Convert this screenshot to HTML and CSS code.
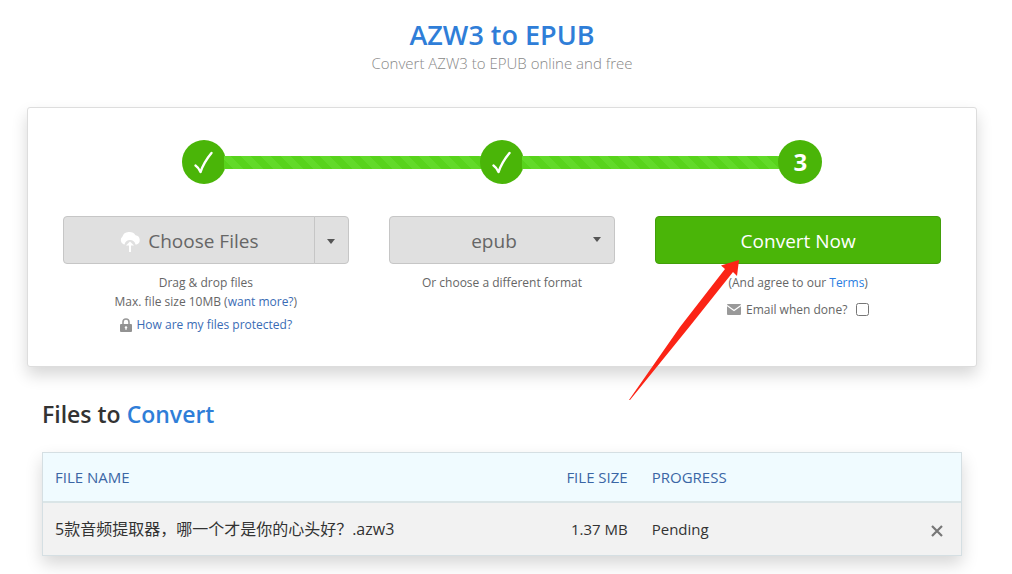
FILE: index.html
```html
<!DOCTYPE html>
<html lang="en">
<head>
    <meta charset="UTF-8">
    <meta name="viewport" content="width=device-width, initial-scale=1.0">
    <title>AZW3 to EPUB</title>
    <link rel="stylesheet" href="styles.css">
</head>
<body>
    <header class="page-header">
        <h1>AZW3 to EPUB</h1>
        <p>Convert AZW3 to EPUB online and free</p>
    </header>

    <main>
        <form class="converter">
            <div class="steps">
                <span class="step">
                    <svg width="22" height="24" viewBox="0 0 22 24"><path d="M2.500 15.500 Q5 17 7.500 22 Q11 12 18.500 3" fill="none" stroke="#fff" stroke-width="2.4" stroke-linecap="round" stroke-linejoin="round"/></svg>
                </span>
                <span class="step-bar"></span>
                <span class="step">
                    <svg width="22" height="24" viewBox="0 0 22 24"><path d="M2.500 15.500 Q5 17 7.500 22 Q11 12 18.500 3" fill="none" stroke="#fff" stroke-width="2.4" stroke-linecap="round" stroke-linejoin="round"/></svg>
                </span>
                <span class="step-bar"></span>
                <span class="step">3</span>
            </div>

            <div class="columns">
                <div class="column">
                    <div class="btn-group">
                        <button type="button" class="btn btn-choose">
                            <svg width="22" height="22" viewBox="0 0 22 22"><path d="M5 14.500 A4.600 4.600 0 0 1 3.500 6.500 A7 6 0 0 1 16.500 5.200 A4.800 4.800 0 0 1 17.500 14.500 L16.500 14.500 Q15.500 10 11 10 Q6.500 10 5.500 14.500 Z" fill="#fff"/><path d="M11 11.500 L15 15.500 H12 V22 H10 V15.500 H7 Z" fill="#fff"/></svg>
                            Choose Files
                        </button>
                        <button type="button" class="btn btn-toggle" aria-label="More sources"><span class="caret"></span></button>
                    </div>
                    <p>Drag &amp; drop files</p>
                    <p>Max. file size 10MB (<a href="#">want more?</a>)</p>
                    <p class="extra">
                        <svg width="12" height="14" viewBox="0 0 12 14"><path d="M3 7 V4 A3 3 0 0 1 9 4 V7" fill="none" stroke="#999" stroke-width="1.6"/><rect y="6" width="12" height="8" rx="1" fill="#929292"/><circle cx="6" cy="9.4" r="1.2" fill="#fff"/><path d="M6 9.5 V12" stroke="#fff"/></svg>
                        <a href="#">How are my files protected?</a>
                    </p>
                </div>

                <div class="column">
                    <div class="select-wrap">
                        <select class="btn" aria-label="Output format">
                            <option>epub</option>
                        </select>
                        <span class="caret"></span>
                    </div>
                    <p>Or choose a different format</p>
                </div>

                <div class="column">
                    <button type="button" class="btn btn-convert">Convert Now</button>
                    <p>(And agree to our <a class="bright" href="#">Terms</a>)</p>
                    <p class="extra">
                        <svg width="14" height="11" viewBox="0 0 14 11"><rect width="14" height="11" rx="1" fill="#999"/><path d="M0 1.5 L7 6.5 L14 1.5" fill="none" stroke="#fff" stroke-width="1.3"/></svg>
                        <label for="email-done">Email when done?</label>
                        <input type="checkbox" id="email-done">
                    </p>
                    <svg class="pointer" width="112" height="142" viewBox="0 0 112 142"><path d="M1 140 L52 67 L97 9 L93 5.500 L111 0 L109 16 L105 12 L62 66 L2 140 Z" fill="#fb2416"/></svg>
                </div>
            </div>
        </form>

        <section class="files">
            <h2>Files to <span>Convert</span></h2>
            <table>
                <thead>
                    <tr>
                        <th class="name">FILE NAME</th>
                        <th class="size">FILE SIZE</th>
                        <th class="progress">PROGRESS</th>
                        <th class="action"></th>
                    </tr>
                </thead>
                <tbody>
                    <tr>
                        <td class="name">5款音频提取器，哪一个才是你的心头好？.azw3</td>
                        <td class="size">1.37 MB</td>
                        <td class="progress">Pending</td>
                        <td class="action">
                            <button type="button" class="remove" aria-label="Remove file">
                                <svg width="12" height="12" viewBox="0 0 12 12"><path d="M1 1 L11 11 M11 1 L1 11" stroke="#777" stroke-width="2.2"/></svg>
                            </button>
                        </td>
                    </tr>
                </tbody>
            </table>
        </section>
    </main>
</body>
</html>
```

FILE: styles.css
```css
* {
    box-sizing: border-box;
}

body {
    margin: 0;
    padding: 17px 35px 18px 27px;
    font-family: "Open Sans", "Noto Sans CJK SC", sans-serif;
    font-size: 12px;
    line-height: 20px;
    color: #666;
    background: #fff;
}

h1, h2, p {
    margin: 0;
}

a {
    color: #3a6cb5;
    text-decoration: none;
}

a.bright {
    color: #2a7de1;
}

.page-header {
    text-align: center;
}

.page-header h1 {
    font-size: 27px;
    line-height: 36px;
    font-weight: 600;
    color: #2f7ed8;
}

.page-header p {
    font-size: 15px;
    font-weight: 300;
    color: #888;
}

/* Converter card */
.converter {
    margin-top: 34px;
    padding: 32px 35px;
    border: 1px solid #ddd;
    border-radius: 3px;
    background: #fff;
    box-shadow: 0 8px 16px rgba(0, 0, 0, 0.16);
}

.steps {
    display: flex;
    align-items: center;
    width: 73%;
    margin: 0 auto 32px;
}

.step {
    display: flex;
    align-items: center;
    justify-content: center;
    flex-shrink: 0;
    width: 44px;
    height: 44px;
    border-radius: 50%;
    background: #4ab508;
    color: #fff;
    font-size: 24px;
    font-weight: 700;
}

.step-bar {
    flex: 1;
    height: 13px;
    margin: 0 -2px;
    background: repeating-linear-gradient(45deg, #58d31c 0 7px, #62da29 7px 14px);
}

.columns {
    display: grid;
    grid-template-columns: 1.26fr 1fr 1.26fr;
    gap: 40px;
    min-height: 117px;
    text-align: center;
}

.column {
    position: relative;
}

.column p {
    line-height: 19px;
}

.column .extra {
    display: flex;
    align-items: center;
    justify-content: center;
    gap: 5px;
    margin-top: 4px;
}

.column .extra input {
    width: 13px;
    height: 13px;
    margin: 0 0 0 4px;
}

.btn {
    width: 100%;
    height: 48px;
    margin: 0 0 9px;
    padding: 2px 0 0;
    border: 1px solid #c6c6c6;
    border-radius: 4px;
    background: #e0e0e0;
    color: #666;
    font-family: inherit;
    font-size: 19px;
}

.btn-group {
    display: flex;
}

.btn-choose {
    display: flex;
    align-items: center;
    justify-content: center;
    gap: 7px;
    border-radius: 4px 0 0 4px;
}

.btn-toggle {
    display: flex;
    align-items: center;
    justify-content: center;
    width: 35px;
    flex-shrink: 0;
    margin-left: -1px;
    border-radius: 0 4px 4px 0;
}

.caret {
    border: 4px solid transparent;
    border-top: 5px solid #555;
    border-bottom: 0;
}

.select-wrap {
    position: relative;
}

.select-wrap select {
    appearance: none;
    padding-right: 16px;
    text-align: center;
    text-align-last: center;
}

.select-wrap .caret {
    position: absolute;
    top: 21px;
    right: 14px;
}

.btn-convert {
    border-color: #429f0a;
    background: #4ab508;
    color: #fff;
}

.btn-convert ~ .extra {
    margin-top: 8px;
}

/* Red arrow drawn over the card */
.pointer {
    position: absolute;
    top: 44px;
    left: -27px;
    pointer-events: none;
}

/* File list */
.files {
    padding: 0 15px;
}

.files h2 {
    margin: 31px 0 22px;
    font-size: 23px;
    line-height: 32px;
    font-weight: 600;
    color: #333;
}

.files h2 span {
    color: #2f7ed8;
}

table {
    width: 100%;
    border: 1px solid #d5dfe3;
    border-spacing: 0;
    table-layout: fixed;
    font-size: 15px;
    color: #333;
    background: #f2f2f2;
    box-shadow: 0 8px 16px rgba(0, 0, 0, 0.16);
}

th, td {
    padding: 0 12px;
    text-align: left;
}

th {
    height: 50px;
    border-bottom: 2px solid #dae5e7;
    background: #f0fbff;
    color: #3b66a5;
    font-weight: 400;
}

td {
    height: 52px;
}

td.name {
    font-size: 16px;
}

.size {
    width: 11%;
    text-align: right;
    white-space: nowrap;
}

.progress {
    width: 29%;
}

.action {
    width: 6%;
    text-align: right;
}

.remove {
    display: inline-flex;
    margin-right: 6px;
    padding: 0;
    border: 0;
    background: none;
    vertical-align: middle;
}
```
